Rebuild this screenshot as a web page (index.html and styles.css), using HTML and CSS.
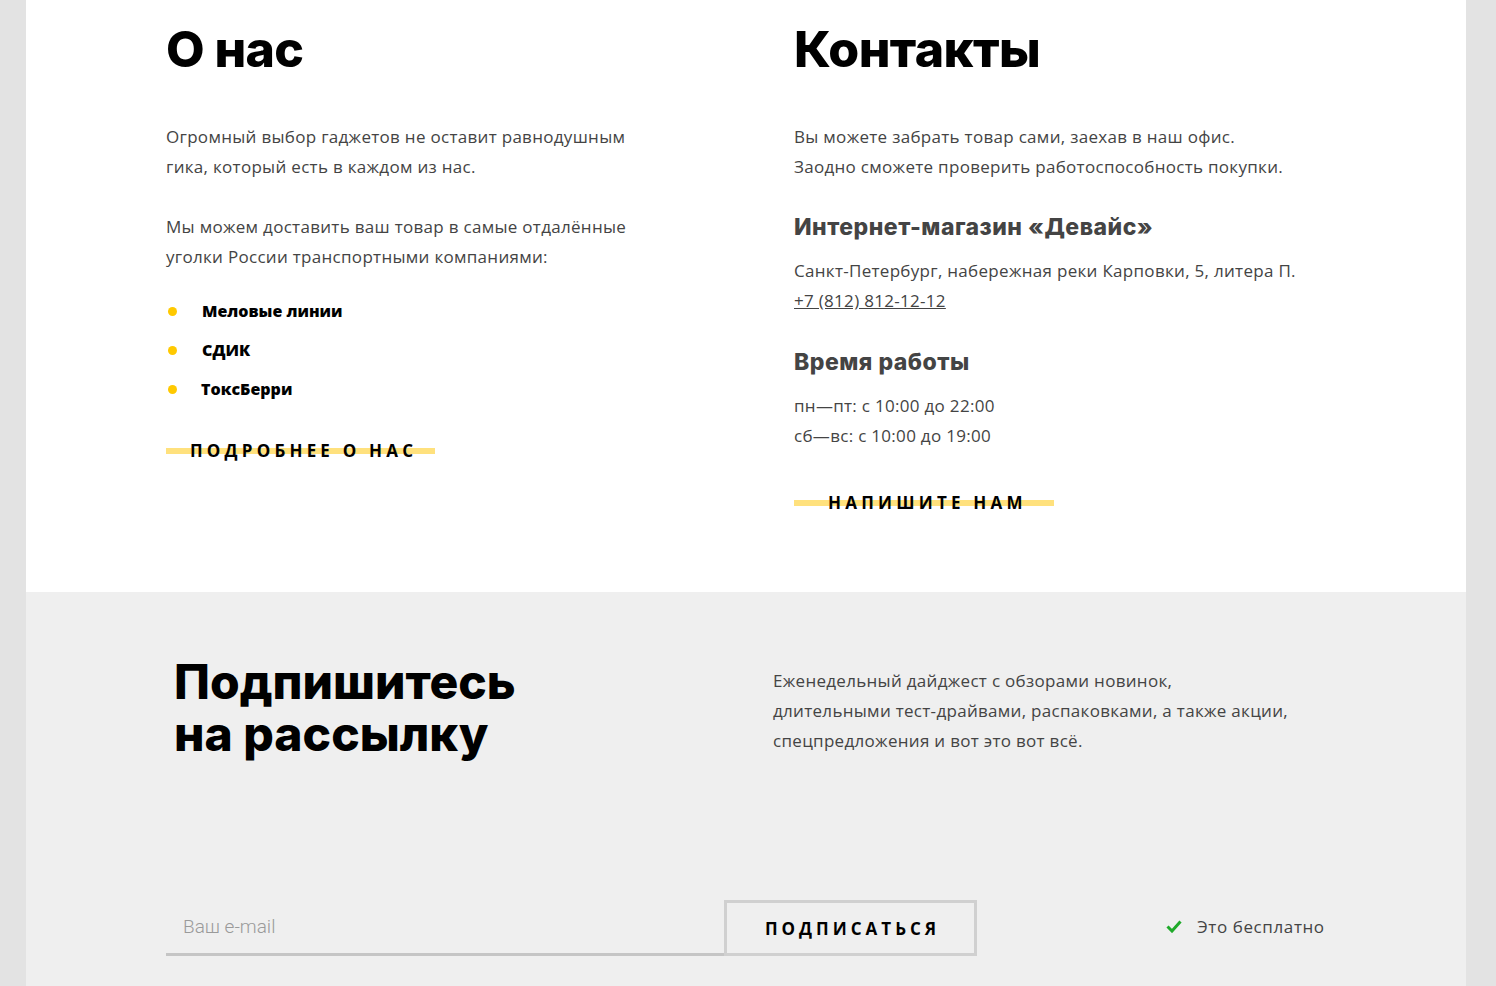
FILE: index.html
```html
<!DOCTYPE html>
<html lang="ru">
<head>
<meta charset="utf-8">
<title>О нас</title>
<link rel="stylesheet" href="styles.css">
</head>
<body>
<div class="page">
  <section class="info">
    <div class="col about">
      <h2 class="title">О нас</h2>
      <p class="text">Огромный выбор гаджетов не оставит равнодушным<br>гика, который есть в каждом из нас.</p>
      <p class="text">Мы можем доставить ваш товар в самые отдалённые<br>уголки России транспортными компаниями:</p>
      <ul class="companies">
        <li>Меловые линии</li>
        <li>СДИК</li>
        <li class="shift">ТоксБерри</li>
      </ul>
      <a class="link-btn about-btn" href="#">Подробнее о нас</a>
    </div>
    <div class="col contacts">
      <h2 class="title">Контакты</h2>
      <p class="text">Вы можете забрать товар сами, заехав в наш офис.<br>Заодно сможете проверить работоспособность покупки.</p>
      <h3 class="subtitle">Интернет-магазин «Девайс»</h3>
      <p class="text tight">Санкт-Петербург, набережная реки Карповки, 5, литера П.<br><a class="phone" href="#">+7 (812) 812-12-12</a></p>
      <h3 class="subtitle">Время работы</h3>
      <p class="text tight">пн—пт: с 10:00 до 22:00<br>сб—вс: с 10:00 до 19:00</p>
      <a class="link-btn contact-btn" href="#">Напишите нам</a>
    </div>
  </section>
  <section class="subscribe">
    <div class="sub-top">
      <h2 class="sub-title">Подпишитесь<br>на рассылку</h2>
      <p class="text sub-text">Еженедельный дайджест с обзорами новинок,<br>длительными тест-драйвами, распаковками, а также акции,<br>спецпредложения и вот это вот всё.</p>
    </div>
    <form class="sub-form">
      <input class="email" type="email" placeholder="Ваш e-mail">
      <button class="sub-btn" type="button">Подписаться</button>
      <span class="free">
        <svg class="check" width="16" height="13" viewBox="0 0 16 13"><path d="M1.5 6.5 L6 11 L14.5 1.5" fill="none" stroke="#1faa2a" stroke-width="3"/></svg>
        Это бесплатно
      </span>
    </form>
  </section>
</div>
</body>
</html>
```
FILE: styles.css
```css
* { box-sizing: border-box; }
body {
  margin: 0;
  background: #e3e3e3;
  font-family: "Open Sans", "Liberation Sans", sans-serif;
}
.page {
  width: 1440px;
  margin-left: 26px;
}
.info {
  background: #fff;
  height: 592px;
  padding: 19px 140px 0;
  display: grid;
  grid-template-columns: 628px 1fr;
}
.title {
  margin: 0 0 43px;
  font-family: "Inter", sans-serif;
  font-weight: 800;
  font-size: 50px;
  line-height: 60px;
  color: #000;
  letter-spacing: -0.6px;
}
.text {
  margin: 0 0 30px;
  font-size: 17px;
  line-height: 30px;
  color: #444;
  letter-spacing: 0.3px;
}
.text.tight { margin-bottom: 31px; }
.companies {
  list-style: none;
  margin: -10px 0 31px;
  padding: 0;
}
.companies li {
  position: relative;
  padding-left: 36px;
  font-weight: 800;
  font-size: 16px;
  line-height: 39px;
  color: #000;
}
.companies li.shift { padding-left: 35px; }
.companies li::before {
  content: "";
  position: absolute;
  left: 2px;
  top: 15px;
  width: 9px;
  height: 9px;
  border-radius: 50%;
  background: #ffc900;
}
.link-btn {
  display: inline-block;
  font-weight: 700;
  font-size: 17px;
  line-height: 20px;
  letter-spacing: 4.2px;
  text-transform: uppercase;
  text-decoration: none;
  color: #000;
  background: linear-gradient(to bottom, transparent 7px, #ffe17d 7px, #ffe17d 13px, transparent 13px);
}
.about-btn { padding: 0 18px 0 24px; }
.contact-btn { padding: 0 27px 0 34px; margin-top: 11px; }
.subtitle {
  margin: 0 0 14px;
  font-family: "Inter", sans-serif;
  font-weight: 800;
  font-size: 23px;
  line-height: 30px;
  letter-spacing: 0.5px;
  color: #444;
}
.phone { color: #444; }

.subscribe {
  background: #efefef;
  height: 394px;
  padding: 64px 140px 0;
}
.sub-top {
  display: grid;
  grid-template-columns: 599px 1fr;
  padding-left: 8px;
}
.sub-title {
  margin: 0;
  font-family: "Inter", sans-serif;
  font-weight: 800;
  font-size: 48px;
  line-height: 52px;
  color: #000;
}
.sub-text { margin: 10px 0 0; }
.sub-form {
  display: flex;
  align-items: flex-end;
  margin-top: 140px;
}
.email {
  width: 558px;
  height: 56px;
  border: 0;
  border-bottom: 3px solid #c5c5c5;
  background: transparent;
  padding: 0 17px;
  font-family: "Roboto", sans-serif;
  font-weight: 300;
  font-size: 19px;
  color: #333;
  outline: none;
}
.email::placeholder { color: #9a9a9a; }
.sub-btn {
  width: 253px;
  height: 56px;
  border: 3px solid #d0d0d0;
  background: transparent;
  font-family: "Open Sans", sans-serif;
  font-weight: 700;
  font-size: 17px;
  letter-spacing: 4px;
  text-transform: uppercase;
  color: #000;
  padding: 0 0 0 4px;
}
.free {
  display: flex;
  align-items: center;
  gap: 15px;
  margin-left: 189px;
  height: 56px;
  padding-bottom: 4px;
  font-size: 17px;
  letter-spacing: 0.6px;
  color: #444;
}
```
